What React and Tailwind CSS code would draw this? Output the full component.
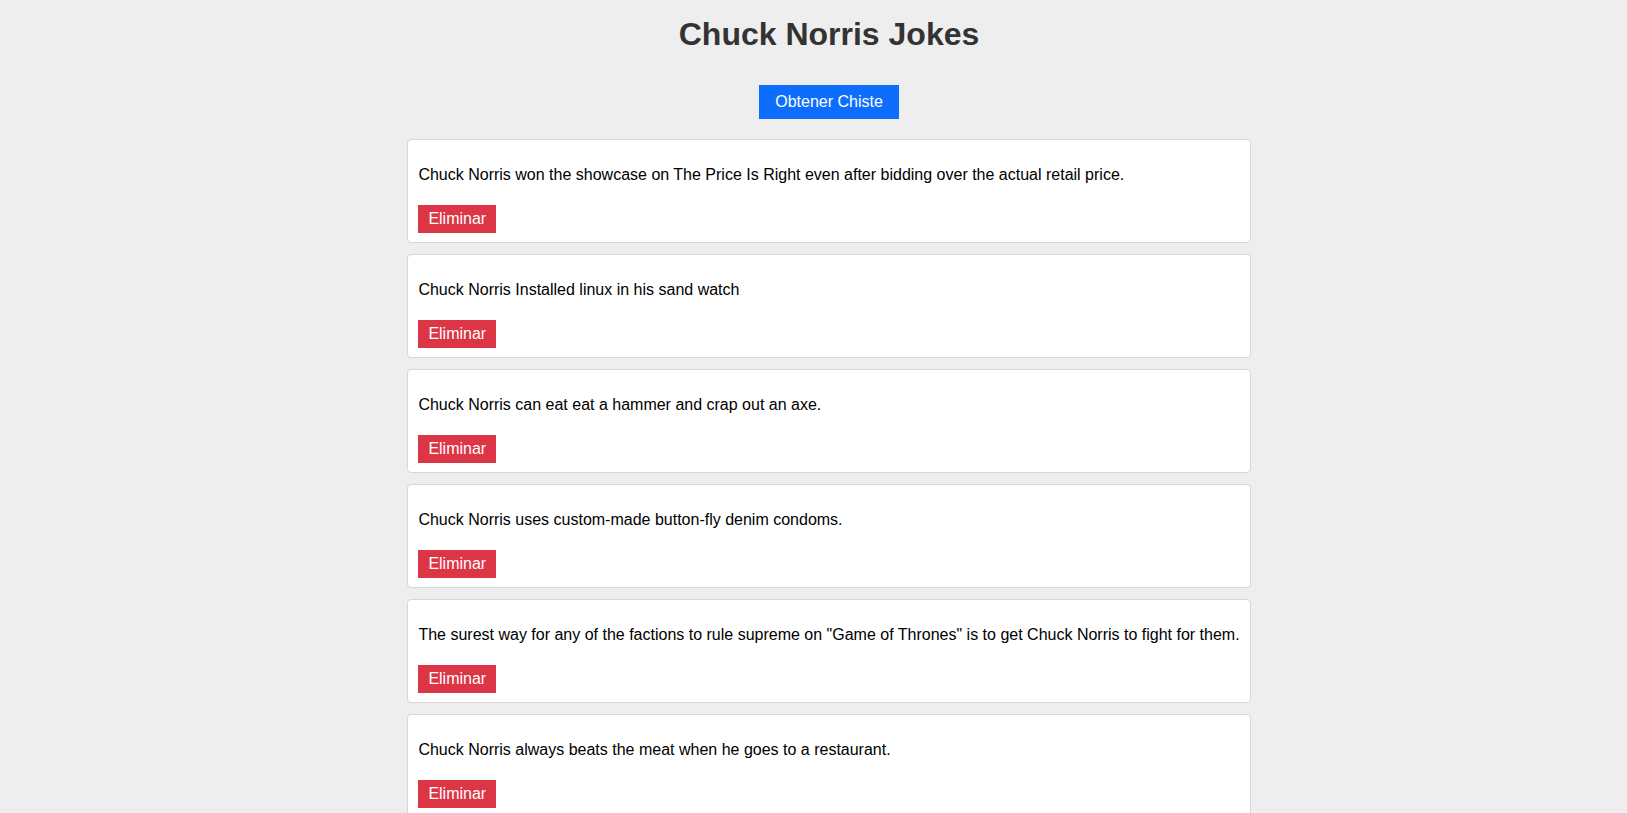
import React from "react";

const jokes = [
  "Chuck Norris won the showcase on The Price Is Right even after bidding over the actual retail price.",
  "Chuck Norris Installed linux in his sand watch",
  "Chuck Norris can eat eat a hammer and crap out an axe.",
  "Chuck Norris uses custom-made button-fly denim condoms.",
  "The surest way for any of the factions to rule supreme on \"Game of Thrones\" is to get Chuck Norris to fight for them.",
  "Chuck Norris always beats the meat when he goes to a restaurant.",
];

export default function App() {
  return (
    <div
      className="min-h-screen bg-[#eeeeee] pl-[31px] flex flex-col items-center"
      style={{ fontFamily: '"Liberation Sans", Arial, sans-serif' }}
    >
      <h1 className="mt-[16px] text-[32px] font-bold leading-[37px] text-[#333333]">
        Chuck Norris Jokes
      </h1>
      <button className="mt-[32px] bg-[#0d6efd] px-4 h-[34px] text-[16px] text-white">
        Obtener Chiste
      </button>
      <div className="mt-[20px] flex flex-col gap-[11px] w-fit">
        {jokes.map((j, i) => (
          <div
            key={i}
            className="bg-white border border-[#d6d6d6] rounded-[4px] pl-[10px] pr-[10px] pt-[26px] pb-[9px] flex flex-col items-start"
          >
            <p className="text-[16px] leading-[18px] text-black whitespace-nowrap">{j}</p>
            <button className="mt-[21px] bg-[#dc3545] px-[10px] h-[28px] text-[16px] text-white">
              Eliminar
            </button>
          </div>
        ))}
      </div>
    </div>
  );
}
